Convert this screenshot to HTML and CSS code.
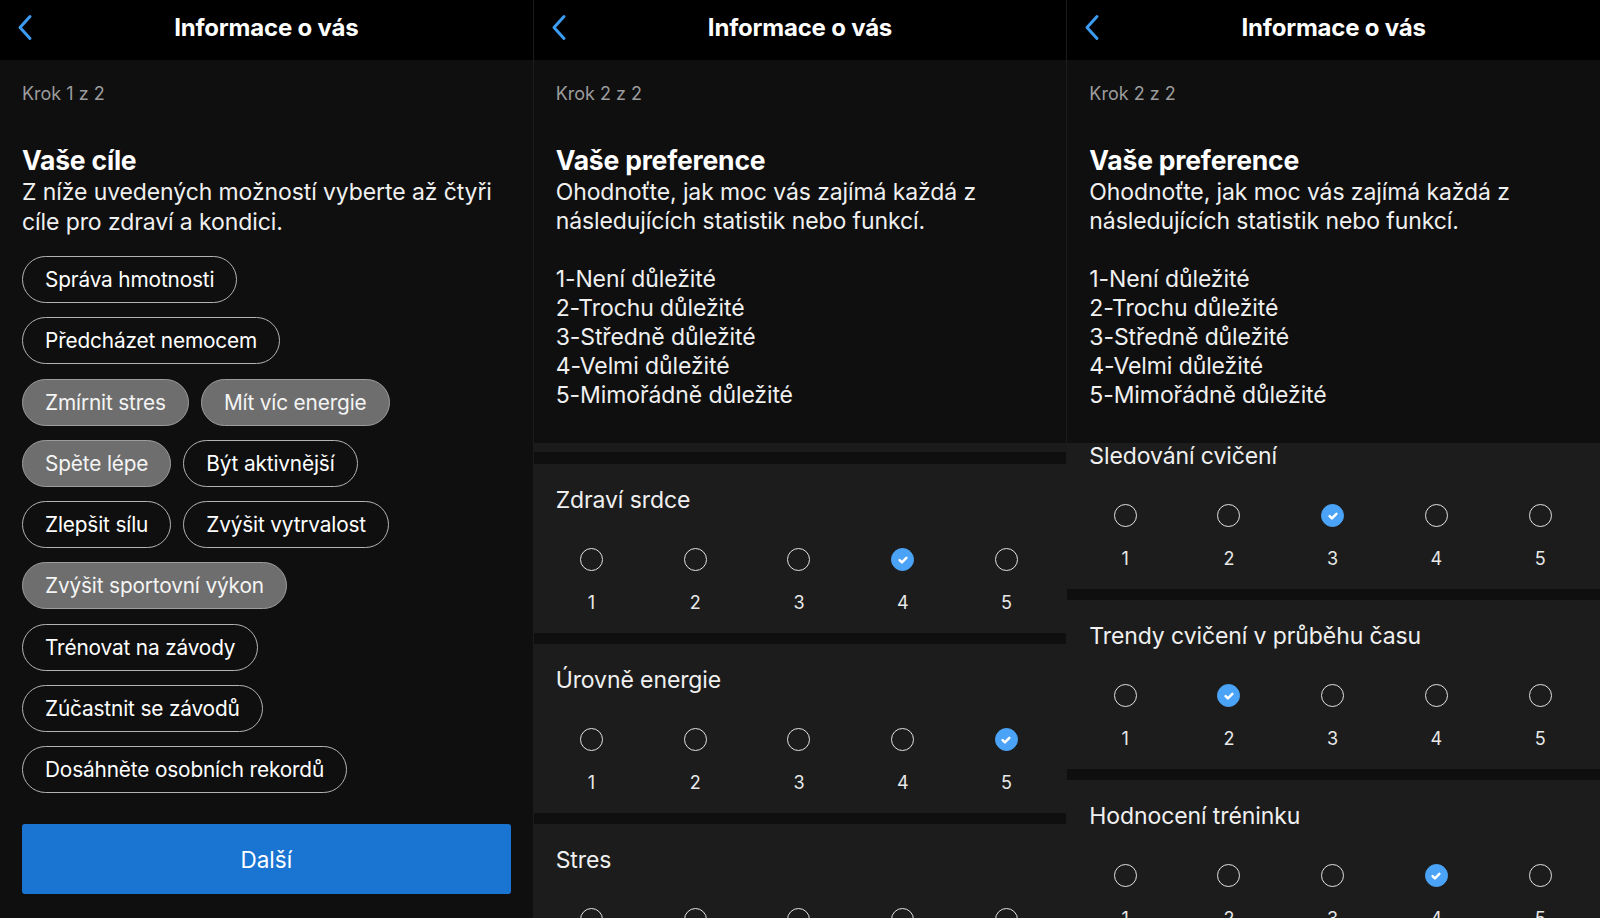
FILE: index.html
```html
<!DOCTYPE html>
<html lang="cs">
<head>
<meta charset="utf-8">
<title>Informace o vás</title>
<link rel="stylesheet" href="styles.css">
</head>
<body>
<div class="screens">
  <section class="panel">
    <header class="bar">
      <svg class="back" width="16" height="27" viewBox="0 0 16 27"><polyline points="13,2.5 3,13.5 13,24.5" fill="none" stroke="#3b9cf2" stroke-width="3" stroke-linecap="round" stroke-linejoin="round"/></svg>
      <h1>Informace o vás</h1>
      <span></span>
    </header>
    <div class="intro">
      <div class="step">Krok 1 z 2</div>
      <h2>Vaše cíle</h2>
      <p class="desc desc-goals">Z níže uvedených možností vyberte až čtyři<br>cíle pro zdraví a kondici.</p>
      <div class="chips">
        <div class="row"><span class="chip">Správa hmotnosti</span></div>
        <div class="row"><span class="chip">Předcházet nemocem</span></div>
        <div class="row"><span class="chip on">Zmírnit stres</span><span class="chip on">Mít víc energie</span></div>
        <div class="row"><span class="chip on">Spěte lépe</span><span class="chip">Být aktivnější</span></div>
        <div class="row"><span class="chip">Zlepšit sílu</span><span class="chip">Zvýšit vytrvalost</span></div>
        <div class="row"><span class="chip on">Zvýšit sportovní výkon</span></div>
        <div class="row"><span class="chip">Trénovat na závody</span></div>
        <div class="row"><span class="chip">Zúčastnit se závodů</span></div>
        <div class="row"><span class="chip">Dosáhněte osobních rekordů</span></div>
      </div>
      <div class="next">Další</div>
    </div>
  </section>

  <section class="panel">
    <header class="bar">
      <svg class="back" width="16" height="27" viewBox="0 0 16 27"><polyline points="13,2.5 3,13.5 13,24.5" fill="none" stroke="#3b9cf2" stroke-width="3" stroke-linecap="round" stroke-linejoin="round"/></svg>
      <h1>Informace o vás</h1>
      <span></span>
    </header>
    <div class="intro intro-pref">
      <div class="step">Krok 2 z 2</div>
      <h2>Vaše preference</h2>
      <p class="desc desc-pref">Ohodnoťte, jak moc vás zajímá každá z<br>následujících statistik nebo funkcí.</p>
      <p class="desc legend">1-Není důležité<br>2-Trochu důležité<br>3-Středně důležité<br>4-Velmi důležité<br>5-Mimořádně důležité</p>
    </div>
    <div class="list">
      <div class="band"></div>
      <div class="cards">
        <div class="card">
          <h3>Zdraví srdce</h3>
          <div class="scale">
            <div class="opt"><span class="radio"></span><span class="num">1</span></div>
            <div class="opt"><span class="radio"></span><span class="num">2</span></div>
            <div class="opt"><span class="radio"></span><span class="num">3</span></div>
            <div class="opt"><span class="radio on"><svg width="12" height="12" viewBox="0 0 12 12"><polyline points="2.6,6.2 4.9,8.4 9.4,3.8" fill="none" stroke="#fff" stroke-width="2.5" stroke-linecap="round" stroke-linejoin="round"/></svg></span><span class="num">4</span></div>
            <div class="opt"><span class="radio"></span><span class="num">5</span></div>
          </div>
        </div>
        <div class="card">
          <h3>Úrovně energie</h3>
          <div class="scale">
            <div class="opt"><span class="radio"></span><span class="num">1</span></div>
            <div class="opt"><span class="radio"></span><span class="num">2</span></div>
            <div class="opt"><span class="radio"></span><span class="num">3</span></div>
            <div class="opt"><span class="radio"></span><span class="num">4</span></div>
            <div class="opt"><span class="radio on"><svg width="12" height="12" viewBox="0 0 12 12"><polyline points="2.6,6.2 4.9,8.4 9.4,3.8" fill="none" stroke="#fff" stroke-width="2.5" stroke-linecap="round" stroke-linejoin="round"/></svg></span><span class="num">5</span></div>
          </div>
        </div>
        <div class="card">
          <h3>Stres</h3>
          <div class="scale">
            <div class="opt"><span class="radio"></span><span class="num">1</span></div>
            <div class="opt"><span class="radio"></span><span class="num">2</span></div>
            <div class="opt"><span class="radio"></span><span class="num">3</span></div>
            <div class="opt"><span class="radio"></span><span class="num">4</span></div>
            <div class="opt"><span class="radio"></span><span class="num">5</span></div>
          </div>
        </div>
      </div>
    </div>
  </section>

  <section class="panel">
    <header class="bar">
      <svg class="back" width="16" height="27" viewBox="0 0 16 27"><polyline points="13,2.5 3,13.5 13,24.5" fill="none" stroke="#3b9cf2" stroke-width="3" stroke-linecap="round" stroke-linejoin="round"/></svg>
      <h1>Informace o vás</h1>
      <span></span>
    </header>
    <div class="intro intro-pref">
      <div class="step">Krok 2 z 2</div>
      <h2>Vaše preference</h2>
      <p class="desc desc-pref">Ohodnoťte, jak moc vás zajímá každá z<br>následujících statistik nebo funkcí.</p>
      <p class="desc legend">1-Není důležité<br>2-Trochu důležité<br>3-Středně důležité<br>4-Velmi důležité<br>5-Mimořádně důležité</p>
    </div>
    <div class="list">
      <div class="cards scrolled">
        <div class="card">
          <h3>Sledování cvičení</h3>
          <div class="scale">
            <div class="opt"><span class="radio"></span><span class="num">1</span></div>
            <div class="opt"><span class="radio"></span><span class="num">2</span></div>
            <div class="opt"><span class="radio on"><svg width="12" height="12" viewBox="0 0 12 12"><polyline points="2.6,6.2 4.9,8.4 9.4,3.8" fill="none" stroke="#fff" stroke-width="2.5" stroke-linecap="round" stroke-linejoin="round"/></svg></span><span class="num">3</span></div>
            <div class="opt"><span class="radio"></span><span class="num">4</span></div>
            <div class="opt"><span class="radio"></span><span class="num">5</span></div>
          </div>
        </div>
        <div class="card">
          <h3>Trendy cvičení v průběhu času</h3>
          <div class="scale">
            <div class="opt"><span class="radio"></span><span class="num">1</span></div>
            <div class="opt"><span class="radio on"><svg width="12" height="12" viewBox="0 0 12 12"><polyline points="2.6,6.2 4.9,8.4 9.4,3.8" fill="none" stroke="#fff" stroke-width="2.5" stroke-linecap="round" stroke-linejoin="round"/></svg></span><span class="num">2</span></div>
            <div class="opt"><span class="radio"></span><span class="num">3</span></div>
            <div class="opt"><span class="radio"></span><span class="num">4</span></div>
            <div class="opt"><span class="radio"></span><span class="num">5</span></div>
          </div>
        </div>
        <div class="card">
          <h3>Hodnocení tréninku</h3>
          <div class="scale">
            <div class="opt"><span class="radio"></span><span class="num">1</span></div>
            <div class="opt"><span class="radio"></span><span class="num">2</span></div>
            <div class="opt"><span class="radio"></span><span class="num">3</span></div>
            <div class="opt"><span class="radio on"><svg width="12" height="12" viewBox="0 0 12 12"><polyline points="2.6,6.2 4.9,8.4 9.4,3.8" fill="none" stroke="#fff" stroke-width="2.5" stroke-linecap="round" stroke-linejoin="round"/></svg></span><span class="num">4</span></div>
            <div class="opt"><span class="radio"></span><span class="num">5</span></div>
          </div>
        </div>
      </div>
    </div>
  </section>
</div>
</body>
</html>
```
FILE: styles.css
```css
* { box-sizing: border-box; }

html, body {
  margin: 0;
  padding: 0;
  background: #0f0f0f;
}

body {
  font-family: Inter, "Noto Sans", "Liberation Sans", sans-serif;
  color: #f2f2f2;
  -webkit-font-smoothing: antialiased;
}

.screens {
  display: grid;
  grid-template-columns: repeat(3, 1fr);
  column-gap: 1px;
  background: #1b1b1b;
  height: 918px;
  overflow: hidden;
}

.panel {
  background: #0f0f0f;
  display: flex;
  flex-direction: column;
  height: 918px;
  overflow: hidden;
}

.bar {
  flex: none;
  height: 60px;
  padding-bottom: 5px;
  background: #000;
  display: grid;
  grid-template-columns: 1fr auto 1fr;
  align-items: center;
}

.back {
  margin-left: 17px;
  margin-top: -1px;
}

.bar h1 {
  margin: 0;
  font-size: 24px;
  font-weight: 700;
  color: #fff;
  letter-spacing: -0.2px;
}

.intro {
  flex: none;
  padding: 0 22px;
}

.step {
  margin-top: 23px;
  font-size: 18px;
  line-height: 22px;
  color: #9c9c9c;
}

.intro h2 {
  margin: 39px 0 0;
  font-size: 26.5px;
  line-height: 32px;
  font-weight: 700;
  color: #fff;
  letter-spacing: -0.2px;
}

.desc {
  margin: 1px 0 0;
  font-size: 23px;
  line-height: 29px;
  color: #f0f0f0;
  letter-spacing: -0.1px;
}

.desc-pref {
  margin-top: 2px;
}

.desc-goals {
  line-height: 30px;
}

.legend {
  margin-top: 29px;
}

.intro-pref {
  height: 383px;
}

.chips {
  margin-top: 19px;
  display: flex;
  flex-direction: column;
  align-items: flex-start;
  gap: 14.25px;
}

.row {
  display: flex;
  gap: 12px;
}

.chip {
  height: 47px;
  display: flex;
  align-items: center;
  padding: 0 22px 0 22px;
  border: 1.5px solid #b3b3b3;
  border-radius: 24px;
  font-size: 20.8px;
  color: #fff;
  white-space: nowrap;
  letter-spacing: -0.15px;
}

.chip.on {
  background: #6e6e6e;
  border-color: #9d9d9d;
  color: #f4f4f4;
}

.next {
  margin-top: 31px;
  height: 70px;
  background: #1a74d2;
  border-radius: 3px;
  display: flex;
  align-items: center;
  justify-content: center;
  font-size: 22.5px;
  color: #fff;
}

.list {
  flex: 1;
  overflow: hidden;
}

.band {
  height: 9px;
  background: #1b1b1b;
}

.cards {
  margin-top: 12px;
  display: flex;
  flex-direction: column;
  gap: 11px;
}

.cards.scrolled {
  margin-top: -23px;
}

.card {
  flex: none;
  height: 169px;
  background: #1c1c1c;
  padding-top: 22px;
}

.card h3 {
  margin: 0;
  padding: 0 22px;
  font-size: 23px;
  line-height: 28px;
  font-weight: 400;
  color: #f0f0f0;
  letter-spacing: -0.1px;
}

.scale {
  margin-top: 34px;
  display: grid;
  grid-template-columns: repeat(5, 1fr);
  padding: 0 8px 0 6px;
}

.opt {
  display: flex;
  flex-direction: column;
  align-items: center;
}

.radio {
  width: 23px;
  height: 23px;
  border-radius: 50%;
  border: 1.5px solid #e2e2e2;
  display: grid;
  place-items: center;
}

.radio.on {
  background: #4aa3f6;
  border-color: #4aa3f6;
}

.radio svg {
  display: block;
}

.num {
  margin-top: 21px;
  font-size: 18px;
  line-height: 22px;
  color: #e8e8e8;
}
```
